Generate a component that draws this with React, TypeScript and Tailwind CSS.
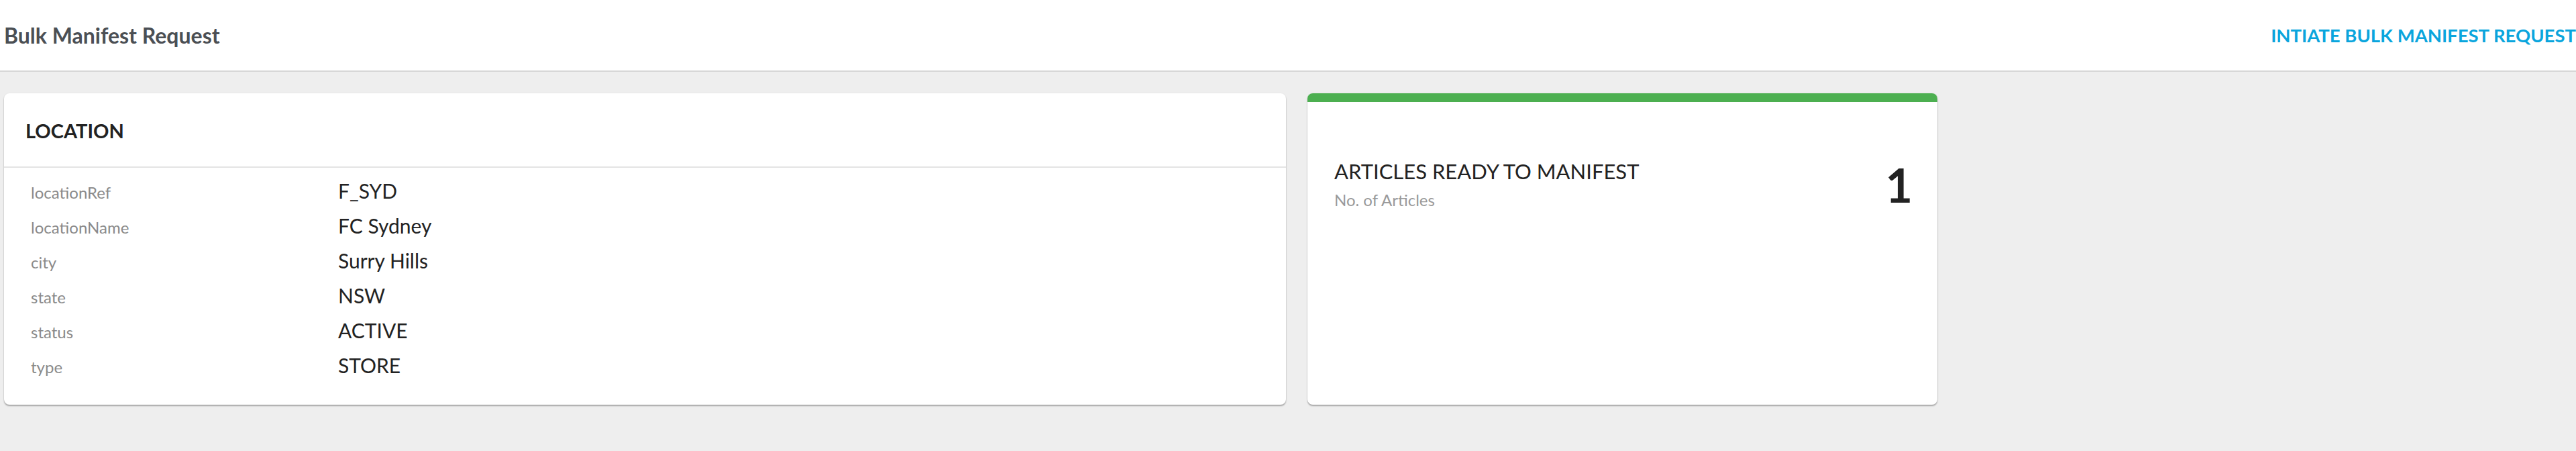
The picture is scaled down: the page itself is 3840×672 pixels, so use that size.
const rows: [string, string][] = [
  ["locationRef", "F_SYD"],
  ["locationName", "FC Sydney"],
  ["city", "Surry Hills"],
  ["state", "NSW"],
  ["status", "ACTIVE"],
  ["type", "STORE"],
];

export default function App() {
  return (
    <div className="min-h-screen bg-[#eeeeee] font-['Lato',sans-serif]">
      {/* Page header */}
      <div className="flex h-[107px] items-center justify-between overflow-hidden border-b-2 border-[#d6d6d6] bg-white pl-[6px]">
        <h1 className="text-[32px] font-bold text-[#4b4f54]">Bulk Manifest Request</h1>
        <button className="whitespace-nowrap text-[27.5px] font-bold text-[#0aa5dd]">
          INTIATE BULK MANIFEST REQUEST
        </button>
      </div>

      <div className="flex items-start gap-8 pl-[6px] pt-8">
        {/* Location card */}
        <div className="w-[1911px] rounded-lg bg-white shadow-[0_2px_2px_rgba(0,0,0,0.3),0_0_2px_rgba(0,0,0,0.08)]">
          <div className="flex h-[111px] items-center border-b-2 border-[#e4e4e4] px-8 pt-[3px]">
            <h2 className="text-[29px] font-bold text-[#222]">LOCATION</h2>
          </div>
          <div className="px-10 pb-[37px] pt-1">
            {rows.map(([label, value]) => (
              <div key={label} className="flex h-[52px] items-baseline pt-[8px]">
                <span className="w-[458px] text-[24px] text-[#8a8a8a]">{label}</span>
                <span className="text-[30px] text-[#222]">{value}</span>
              </div>
            ))}
          </div>
        </div>

        {/* Articles card */}
        <div className="h-[464px] w-[939px] overflow-hidden rounded-lg bg-white shadow-[0_2px_2px_rgba(0,0,0,0.3),0_0_2px_rgba(0,0,0,0.08)]">
          <div className="h-[13px] bg-[#4caf50]" />
          <div className="flex items-center justify-between pl-10 pr-[37px] pt-[85px]">
            <div>
              <div className="text-[31px] leading-[36px] text-[#222]">ARTICLES READY TO MANIFEST</div>
              <div className="mt-[11px] text-[24px] leading-[28px] text-[#999]">No. of Articles</div>
            </div>
            <div className="text-[70px] font-bold leading-none text-[#222]">1</div>
          </div>
        </div>
      </div>
    </div>
  );
}
